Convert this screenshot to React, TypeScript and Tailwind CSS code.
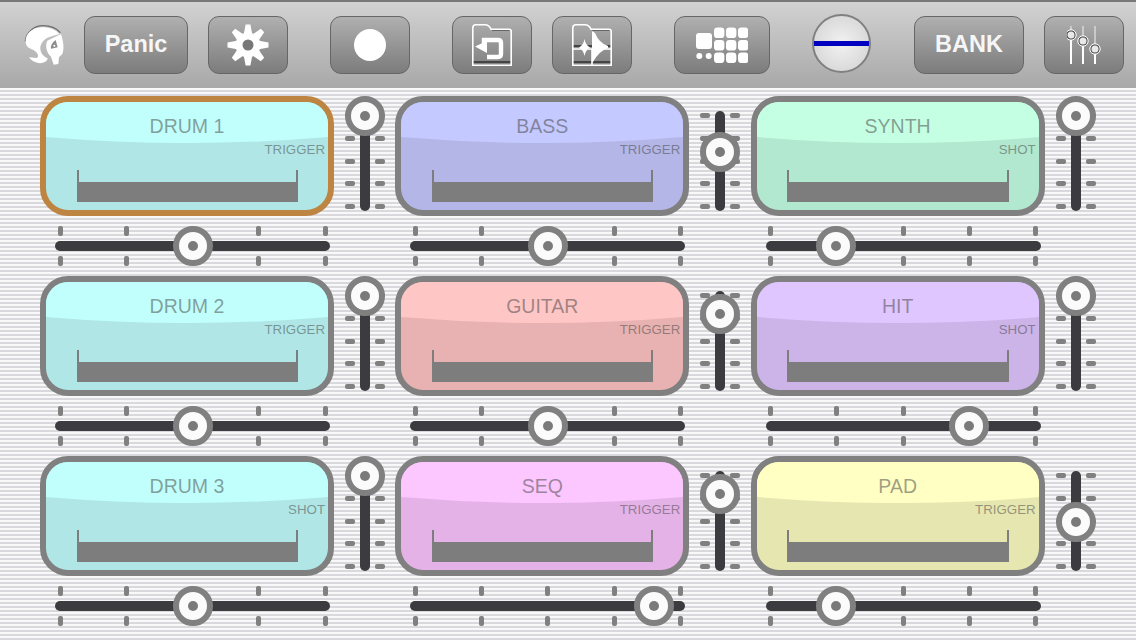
import React from "react";

type Pad = {
  name: string;
  mode: string;
  border: string;
  lower: string;
  upper: string;
  v: number;
  h: number;
};

const pads: Pad[] = [
  { name: "DRUM 1", mode: "TRIGGER", border: "border-[#bd8442]", lower: "bg-[#b0e7e6]", upper: "fill-[#c0fffb]", v: 0, h: 117.5 },
  { name: "BASS", mode: "TRIGGER", border: "border-[#808080]", lower: "bg-[#b3b6e6]", upper: "fill-[#c4c9ff]", v: 36, h: 117.5 },
  { name: "SYNTH", mode: "SHOT", border: "border-[#808080]", lower: "bg-[#b2e8cf]", upper: "fill-[#c4ffe4]", v: 0, h: 50.5 },
  { name: "DRUM 2", mode: "TRIGGER", border: "border-[#808080]", lower: "bg-[#b0e7e6]", upper: "fill-[#c0fffb]", v: 0, h: 117.5 },
  { name: "GUITAR", mode: "TRIGGER", border: "border-[#808080]", lower: "bg-[#e8b2b2]", upper: "fill-[#ffc6c6]", v: 18, h: 117.5 },
  { name: "HIT", mode: "SHOT", border: "border-[#808080]", lower: "bg-[#ccb3e8]", upper: "fill-[#e0c6ff]", v: 0, h: 183.5 },
  { name: "DRUM 3", mode: "SHOT", border: "border-[#808080]", lower: "bg-[#b0e7e6]", upper: "fill-[#c0fffb]", v: 0, h: 117.5 },
  { name: "SEQ", mode: "TRIGGER", border: "border-[#808080]", lower: "bg-[#e5b2e8]", upper: "fill-[#fcc6ff]", v: 18, h: 224 },
  { name: "PAD", mode: "TRIGGER", border: "border-[#808080]", lower: "bg-[#e6e6b0]", upper: "fill-[#ffffc4]", v: 46, h: 50.5 },
];

function Knob({ style }: { style: React.CSSProperties }) {
  return (
    <div
      className="absolute flex h-10 w-10 items-center justify-center rounded-full border-[6px] border-[#808080] bg-[#fbfbfb]"
      style={style}
    >
      <div className="h-[10px] w-[10px] rounded-full bg-[#7a7a7a]" />
    </div>
  );
}

function VSlider({ v }: { v: number }) {
  const ticks = [0, 1, 2, 3, 4];
  return (
    <div className="relative ml-[11px] flex h-[115px] w-10 gap-[5px] pt-[15px]">
      <div className="flex w-[10px] flex-col justify-between py-[2px]">
        {ticks.map((t) => (
          <div key={t} className="h-[5px] w-[10px] rounded-[2px] bg-[#808080]" />
        ))}
      </div>
      <div className="w-[10px] rounded-full bg-[#3c3c40]" />
      <div className="flex w-[10px] flex-col justify-between py-[2px]">
        {ticks.map((t) => (
          <div key={t} className="h-[5px] w-[10px] rounded-[2px] bg-[#808080]" />
        ))}
      </div>
      <Knob style={{ top: v, left: 0 }} />
    </div>
  );
}

function HTicks() {
  return (
    <div className="flex h-[10px] justify-between px-[2.5px]">
      {[0, 1, 2, 3, 4].map((t) => (
        <div key={t} className="h-[10px] w-[5px] rounded-[2px] bg-[#808080]" />
      ))}
    </div>
  );
}

function HSlider({ h }: { h: number }) {
  return (
    <div className="relative mt-[10px] ml-[15px] flex h-10 w-[275px] flex-col justify-between">
      <HTicks />
      <div className="h-[10px] rounded-full bg-[#3c3c40]" />
      <HTicks />
      <Knob style={{ left: h, top: 0 }} />
    </div>
  );
}

function PadCell({ pad }: { pad: Pad }) {
  return (
    <div className="flex flex-col">
      <div className="flex items-start">
        <div className={`relative flex h-[120px] w-[294px] flex-col overflow-hidden rounded-[28px] border-[6px] ${pad.border} ${pad.lower}`}>
          <svg className="absolute inset-0 h-full w-full" viewBox="0 0 282 108" preserveAspectRatio="none">
            <path className={pad.upper} d="M0 0H282V35Q141 47 0 35Z" />
          </svg>
          <div className="relative flex flex-col">
            <div className="mt-[12px] h-6 text-center text-[19.5px] leading-6 text-[#404040]/50">{pad.name}</div>
            <div className="mt-[4px] h-4 pr-[3px] text-right text-[13.3px] leading-4 text-[#404040]/50">{pad.mode}</div>
            <div className="mt-[12px] ml-[30.5px] flex h-8 w-[221.5px] items-end border-x-2 border-[#7d7d7d]">
              <div className="h-5 w-full bg-[#7d7d7d]" />
            </div>
          </div>
        </div>
        <VSlider v={pad.v} />
      </div>
      <HSlider h={pad.h} />
    </div>
  );
}

function Btn({ className, children }: { className: string; children: React.ReactNode }) {
  return (
    <div className={`flex h-[58px] items-center justify-center rounded-[11px] border border-[#666666] bg-linear-to-b from-[#b0b0b0] to-[#7c7c7c] text-[23.5px] leading-none font-bold text-[#f6f6f6] ${className}`}>
      {children}
    </div>
  );
}

function Logo() {
  return (
    <svg className="ml-6 h-[42px] w-[41px]" viewBox="27 30 123 126">
      <path d="M31 82C34 54 58 35 84 35C106 35 124 42 136 56" fill="none" stroke="#6e6e6e" strokeWidth="4" />
      <path fill="#fff" d="M32 85C30 60 50 41 80 40C100 39 122 46 133 60L105 68C90 72 78 85 76 100C75 115 84 127 98 133C96 150 62 156 42 130L66 132C74 126 66 112 50 106C38 101 33 95 32 85Z" />
      <path fill="#fff" d="M97 80L138 60C146 85 148 105 142 120L132 130L130 150L116 152L108 128C94 115 90 95 97 80Z" />
      <path fill="#8c8c8c" d="M122 78L128 100L108 104C106 96 112 85 122 78Z" />
      <circle cx="118" cy="95" r="3" fill="#fff" />
    </svg>
  );
}

function Gear() {
  const a = [0, 45, 90, 135, 180, 225, 270, 315];
  return (
    <svg className="h-[42px] w-[42px]" viewBox="-21 -21 42 42">
      <circle r="12.5" fill="#fff" />
      {a.map((d) => (
        <polygon key={d} fill="#fff" points="-4.2,-11 -2.4,-20.5 2.4,-20.5 4.2,-11" transform={`rotate(${d})`} />
      ))}
      <circle r="5.5" fill="#777" />
    </svg>
  );
}

function FolderBase({ children }: { children: React.ReactNode }) {
  return (
    <svg className="h-[42px] w-10" viewBox="0 0 40 42">
      <path d="M20 6.5H38" stroke="#666" strokeWidth="1" />
      <path d="M1 38H39" stroke="#444" strokeWidth="2" />
      {children}
      <path d="M.8 41.2V4Q.8 .8 4 .8H13Q17 .8 19 5.2H37Q39.2 5.2 39.2 7.5V41.2Z" fill="none" stroke="#fff" strokeWidth="1.6" />
    </svg>
  );
}

function FolderBack() {
  return (
    <FolderBase>
      <path d="M12 22V16H26Q29 16 29 19V30Q29 33 26 33H15" fill="none" stroke="#fff" strokeWidth="4.4" />
      <polygon points="3,22.5 15,17 15,29" fill="#fff" />
    </FolderBase>
  );
}

function FolderSlice() {
  return (
    <FolderBase>
      <path d="M1 22H39" stroke="#444" strokeWidth="2" />
      <path d="M1 25H39M20 25V41" stroke="#fff" strokeWidth="1.6" />
      <path d="M12.5 15Q13.5 21 18 23.5Q13.5 26 12.5 32Q11.5 26 7 23.5Q11.5 21 12.5 15Z" fill="#fff" />
      <path d="M20 7L23 9Q27 19 36 22V24Q27 27 21 38H20Z" fill="#fff" />
    </FolderBase>
  );
}

function PadGrid() {
  const xs = [18, 30, 42];
  const ys = [0.5, 13, 25.5];
  return (
    <svg className="h-9 w-[52px]" viewBox="0 0 52 36">
      <rect x="0" y="6" width="16" height="16" rx="3" fill="#fff" />
      {ys.map((y) => xs.map((x) => <rect key={`${x}-${y}`} x={x} y={y} width="10.4" height="10.6" rx="3.4" fill="#fff" />))}
      <circle cx="3.3" cy="29" r="3" fill="#fff" />
      <circle cx="12.7" cy="29" r="3" fill="#fff" />
    </svg>
  );
}

function Mixer() {
  const items = [
    { x: 4, y: 9 },
    { x: 16, y: 15 },
    { x: 28, y: 23 },
  ];
  return (
    <svg className="h-[38px] w-[34px]" viewBox="0 0 34 38">
      {items.map((i) => (
        <g key={i.x}>
          <path d={`M${i.x} 0V${i.y}`} stroke="#dcdcdc" strokeWidth="1.4" />
          <path d={`M${i.x} ${i.y}V38`} stroke="#fff" strokeWidth="2" />
          <circle cx={i.x} cy={i.y} r="4.2" fill="#e8e8e8" stroke="#555" strokeWidth="1.4" />
          <circle cx={i.x} cy={i.y} r="5.2" fill="none" stroke="#fff" strokeWidth="1" />
        </g>
      ))}
    </svg>
  );
}

export default function App() {
  return (
    <div className="h-[640px] w-[1136px] overflow-hidden bg-[repeating-linear-gradient(to_bottom,#f8f8f8_0,#f8f8f8_2px,#d9d9dd_2px,#d9d9dd_4px)] font-['Liberation_Sans',Arial,sans-serif]">
      <div className="flex h-[88px] items-center border-t-2 border-[#777777] bg-linear-to-b from-[#d2d2d2] to-[#a8a8a8]">
        <Logo />
        <Btn className="ml-[19px] w-[104px]">Panic</Btn>
        <Btn className="ml-5 w-20"><Gear /></Btn>
        <Btn className="ml-[42px] w-20"><div className="h-8 w-8 rounded-full bg-white" /></Btn>
        <Btn className="ml-[42px] w-20"><FolderBack /></Btn>
        <Btn className="ml-5 w-20"><FolderSlice /></Btn>
        <Btn className="ml-[42px] w-24"><PadGrid /></Btn>
        <div className="mb-[3px] ml-[42px] flex h-[59px] w-[59px] items-center rounded-full border-2 border-[#808080] bg-radial from-[#f2f2f2] to-[#d0d0d0]">
          <div className="h-[5px] w-full bg-[#0000c0]" />
        </div>
        <Btn className="ml-[43px] w-[110px]">BANK</Btn>
        <Btn className="ml-5 w-20"><Mixer /></Btn>
      </div>
      <div className="grid grid-cols-[repeat(3,355.33px)] gap-y-[10px] pt-2 pl-10">
        {pads.map((p) => (
          <PadCell key={p.name} pad={p} />
        ))}
      </div>
    </div>
  );
}
